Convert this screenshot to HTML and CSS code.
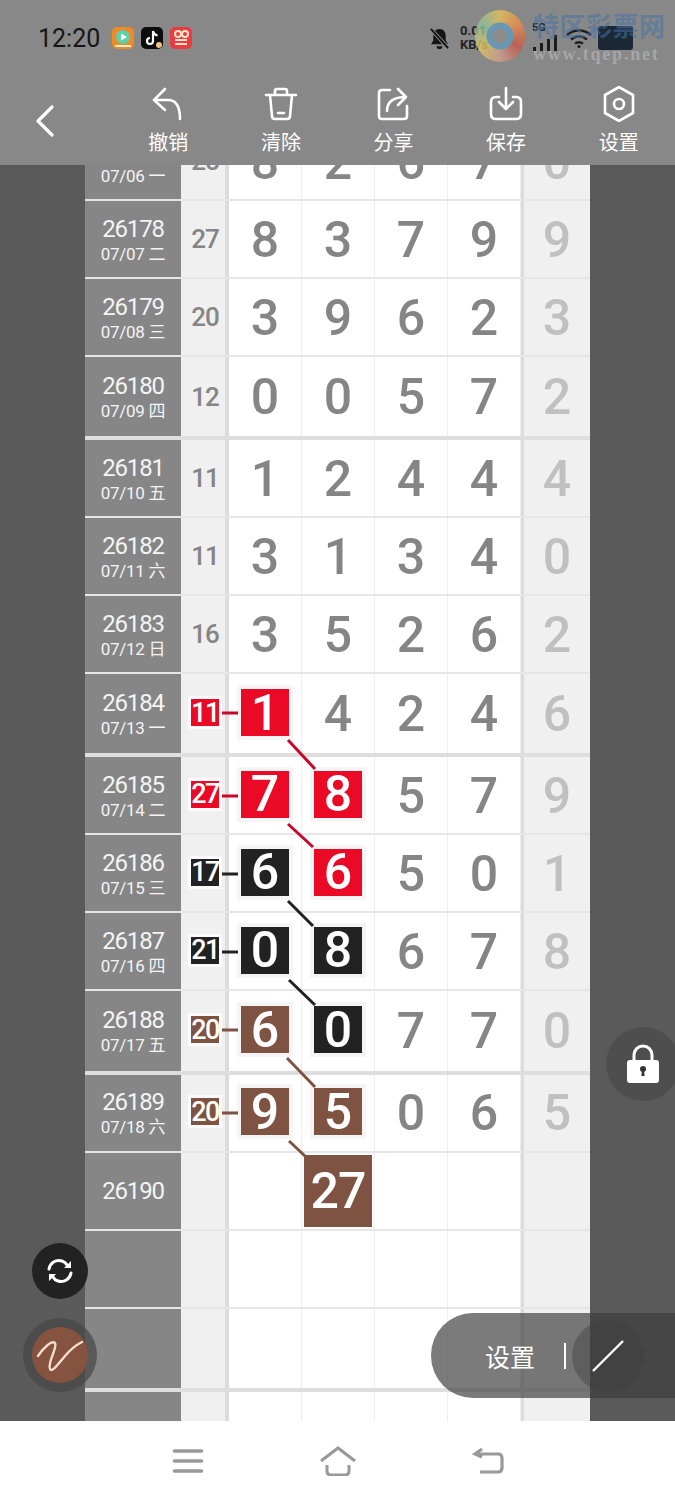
FILE: index.html
```html
<!DOCTYPE html>
<html lang="zh-CN">
<head>
    <meta charset="UTF-8">
    <meta name="viewport" content="width=device-width, initial-scale=1.0">
    <title>走势图</title>
    <link rel="stylesheet" href="styles.css">
</head>
<body>
    <header class="top">
        <div class="status">
            <span class="clock">12:20</span>
            <svg class="app" viewBox="0 0 22 22"><rect width="22" height="22" rx="5" fill="#f08a24"/><circle cx="11" cy="10" r="7" fill="#5fd0a8"/><path d="M9 6.500l6 3.500-6 3.500z" fill="#fff"/><rect x="3" y="18" width="16" height="2" fill="#fff3d8"/></svg>
            <svg class="app" viewBox="0 0 22 22"><rect width="22" height="22" rx="5" fill="#0c0c0c"/><path d="M12 4v10a3 3 0 1 1-3-3M12 4c.5 2.500 2 4 4.500 4.300" fill="none" stroke="#fff" stroke-width="2.200"/><circle cx="18" cy="18" r="3" fill="#f0c080"/></svg>
            <svg class="app" viewBox="0 0 22 22"><rect width="22" height="22" rx="5" fill="#ea3b42"/><circle cx="8" cy="7" r="3" fill="none" stroke="#ffe6c8" stroke-width="2"/><circle cx="15" cy="7" r="3" fill="none" stroke="#ffe6c8" stroke-width="2"/><path d="M5 13h12M5 17h12" stroke="#ffe6c8" stroke-width="2.200"/></svg>
            <div class="status-right">
                <svg class="bell" viewBox="0 0 22 24"><path d="M11 2c4 0 6.500 3 6.500 7v5l2.500 4H2l2.500-4V9C4.500 5 7 2 11 2zM8 20h6a3 3 0 0 1-6 0z" fill="#141414"/><path d="M2 2l18 20" stroke="#888" stroke-width="4"/><path d="M2 2l18 20" stroke="#141414" stroke-width="2"/></svg>
                <div class="speed">0.01<br>KB/s</div>
                <div class="signal"><span class="five">5G</span><svg viewBox="0 0 26 16"><path d="M1 12h3v4H1zM8 8h3v8H8zM15 4h3v12h-3zM22 0h3v16h-3z" fill="#1d1d1d"/></svg></div>
                <svg class="wifi" viewBox="0 0 26 20"><path d="M1 7c7-6 17-6 24 0M5 11.500c5-4 11-4 16 0M9 15.500c3-2 5-2 8 0" fill="none" stroke="#1d1d1d" stroke-width="2.400"/><circle cx="13" cy="18.500" r="1.500" fill="#1d1d1d"/></svg>
                <div class="battery"></div>
            </div>
        </div>
        <nav class="toolbar">
            <div class="back"><svg viewBox="0 0 20 32"><path d="M17 2L3 16l14 14" fill="none" stroke="#fff" stroke-width="3.200" stroke-linecap="round" stroke-linejoin="round"/></svg></div>
            <div class="tool"><svg viewBox="0 0 36 36"><path d="M15 3L4 14l11 10M4 14h14c9 0 12 8 12 19"/></svg><span>撤销</span></div>
            <div class="tool"><svg viewBox="0 0 36 36"><path d="M3 9h30M12 9V5q0-2 2-2h8q2 0 2 2v4M7 9l2 21q0 3 3 3h12q3 0 3-3l2-21M15 27h6"/></svg><span>清除</span></div>
            <div class="tool"><svg viewBox="0 0 36 36"><path d="M15 4H7q-3 0-3 3v23q0 3 3 3h22q3 0 3-3V20M12 25c0-9 6-14 19-14M23 3l8 8-8 8"/></svg><span>分享</span></div>
            <div class="tool"><svg viewBox="0 0 36 36"><path d="M11 11H8q-5 0-5 5v12q0 5 5 5h20q5 0 5-5V16q0-5-5-5h-3M18 2v21M11 16l7 7 7-7"/></svg><span>保存</span></div>
            <div class="tool"><svg viewBox="0 0 36 36"><path d="M18 1l14 8v18l-14 8-14-8V9z"/><circle cx="18" cy="18" r="5"/></svg><span>设置</span></div>
        </nav>
        <div class="logo-mark"><span class="swirl"></span><div class="logo-text"><b>特区彩票网</b><i>www.tqep.net</i></div></div>
    </header>

    <main class="view">
        <div class="sheet">
            <div class="row"><div class="date"><b>26177</b><small>07/06 一</small></div><div class="sum">25</div><div class="num">8</div><div class="num">2</div><div class="num">6</div><div class="num">7</div><div class="last">0</div></div>
            <div class="row"><div class="date"><b>26178</b><small>07/07 二</small></div><div class="sum">27</div><div class="num">8</div><div class="num">3</div><div class="num">7</div><div class="num">9</div><div class="last">9</div></div>
            <div class="row"><div class="date"><b>26179</b><small>07/08 三</small></div><div class="sum">20</div><div class="num">3</div><div class="num">9</div><div class="num">6</div><div class="num">2</div><div class="last">3</div></div>
            <div class="row end"><div class="date"><b>26180</b><small>07/09 四</small></div><div class="sum">12</div><div class="num">0</div><div class="num">0</div><div class="num">5</div><div class="num">7</div><div class="last">2</div></div>

            <div class="row"><div class="date"><b>26181</b><small>07/10 五</small></div><div class="sum">11</div><div class="num">1</div><div class="num">2</div><div class="num">4</div><div class="num">4</div><div class="last">4</div></div>
            <div class="row"><div class="date"><b>26182</b><small>07/11 六</small></div><div class="sum">11</div><div class="num">3</div><div class="num">1</div><div class="num">3</div><div class="num">4</div><div class="last">0</div></div>
            <div class="row"><div class="date"><b>26183</b><small>07/12 日</small></div><div class="sum">16</div><div class="num">3</div><div class="num">5</div><div class="num">2</div><div class="num">6</div><div class="last">2</div></div>
            <div class="row end"><div class="date"><b>26184</b><small>07/13 一</small></div><div class="sum"><span class="tag red">11</span></div><div class="num"><span class="ball red">1</span></div><div class="num">4</div><div class="num">2</div><div class="num">4</div><div class="last">6</div></div>

            <div class="row"><div class="date"><b>26185</b><small>07/14 二</small></div><div class="sum"><span class="tag red">27</span></div><div class="num"><span class="ball red">7</span></div><div class="num"><span class="ball red">8</span></div><div class="num">5</div><div class="num">7</div><div class="last">9</div></div>
            <div class="row"><div class="date"><b>26186</b><small>07/15 三</small></div><div class="sum"><span class="tag black">17</span></div><div class="num"><span class="ball black">6</span></div><div class="num"><span class="ball red">6</span></div><div class="num">5</div><div class="num">0</div><div class="last">1</div></div>
            <div class="row"><div class="date"><b>26187</b><small>07/16 四</small></div><div class="sum"><span class="tag black">21</span></div><div class="num"><span class="ball black">0</span></div><div class="num"><span class="ball black">8</span></div><div class="num">6</div><div class="num">7</div><div class="last">8</div></div>
            <div class="row end"><div class="date"><b>26188</b><small>07/17 五</small></div><div class="sum"><span class="tag brown">20</span></div><div class="num"><span class="ball brown">6</span></div><div class="num"><span class="ball black">0</span></div><div class="num">7</div><div class="num">7</div><div class="last">0</div></div>

            <div class="row"><div class="date"><b>26189</b><small>07/18 六</small></div><div class="sum"><span class="tag brown">20</span></div><div class="num"><span class="ball brown">9</span></div><div class="num"><span class="ball brown">5</span></div><div class="num">0</div><div class="num">6</div><div class="last">5</div></div>
            <div class="row"><div class="date"><b>26190</b></div><div class="sum"></div><div class="num"></div><div class="num"><span class="big">27</span></div><div class="num"></div><div class="num"></div><div class="last"></div></div>
            <div class="row"><div class="date"></div><div class="sum"></div><div class="num"></div><div class="num"></div><div class="num"></div><div class="num"></div><div class="last"></div></div>
            <div class="row end"><div class="date"></div><div class="sum"></div><div class="num"></div><div class="num"></div><div class="num"></div><div class="num"></div><div class="last"></div></div>

            <div class="row"><div class="date"></div><div class="sum"></div><div class="num"></div><div class="num"></div><div class="num"></div><div class="num"></div><div class="last"></div></div>

            <!-- connecting lines, viewBox is in page coordinates -->
            <svg class="links" viewBox="85 122 505 1300">
                <g stroke="#c8082a"><path d="M222 712h16M288 739l27 29M222 795h16M288 823l25 23"/></g>
                <g stroke="#222"><path d="M222 873h16M288 900l25 25M222 951h16M289 979l26 25"/></g>
                <g stroke="#7f5342"><path d="M222 1029h16M287 1057l28 29M222 1112h16M289 1140l16 15"/></g>
            </svg>
        </div>

        <div class="fab sync"><svg viewBox="0 0 32 32"><path d="M5 14C6 8 12 4 18 6c2 .7 4 2 5 4M27 18c-1 6-7 10-13 8-2-.7-4-2-5-4" fill="none" stroke="#fff" stroke-width="3" stroke-linecap="round"/><path d="M27 6v7h-7zM5 26v-7h7z" fill="#fff"/></svg></div>
        <div class="fab pen"><svg viewBox="0 0 50 40"><path d="M3 21C9 12 17 5 20 8c3 4-8 20-5 26 2 4 9-6 15-13 5-6 11-11 17-14" fill="none" stroke="#f7dccf" stroke-width="2.400" stroke-linecap="round"/></svg></div>
        <div class="fab lock"><svg viewBox="0 0 34 40"><path d="M8 18V11a9 9 0 0 1 18 0v7" fill="none" stroke="#fff" stroke-width="3"/><rect x="1" y="16" width="32" height="23" rx="3" fill="#fff"/><circle cx="17" cy="25" r="3" fill="#333"/><path d="M16 26h2l.6 6h-3.200z" fill="#333"/></svg></div>

        <div class="pill">
            <span class="pill-label">设置</span>
            <span class="pill-bar"></span>
            <span class="pill-round"><svg viewBox="0 0 32 32"><path d="M1 31L31 1" stroke="#fff" stroke-width="2.400"/></svg></span>
        </div>
    </main>

    <footer class="nav">
        <svg viewBox="0 0 36 30"><path d="M4.500 5h27M4.500 15h27M4.500 25h27" stroke="#999" stroke-width="3.600" stroke-linecap="round"/></svg>
        <svg viewBox="0 0 36 30"><path d="M1 15L18 2l17 13M7 19v6q0 4 4 4h14q4 0 4-4v-6" fill="none" stroke="#999" stroke-width="3"/></svg>
        <svg viewBox="0 0 36 30"><path d="M5 8h23q4 0 4 4v10q0 4-4 4H10M12 3L5 8l7 3" fill="none" stroke="#999" stroke-width="3.200"/></svg>
    </footer>
</body>
</html>
```

FILE: styles.css
```css
* {
    box-sizing: border-box;
}
body {
    margin: 0;
    width: 675px;
    height: 1500px;
    display: flex;
    flex-direction: column;
    overflow: hidden;
    background: #fff;
    font-family: Roboto, "Noto Sans CJK SC", sans-serif;
}

/* header */
.top {
    position: relative;
    height: 165px;
    flex: none;
    background: #888;
    z-index: 2;
}
.status {
    height: 72px;
    padding: 4px 0 0 38px;
    display: flex;
    align-items: center;
}
.clock {
    width: 74px;
    font-size: 25px;
    color: #161616;
}
.app {
    width: 22px;
    height: 22px;
    margin-right: 7px;
}
.status-right {
    margin-left: auto;
    display: flex;
    align-items: center;
}
.bell {
    width: 21px;
    height: 23px;
    margin-right: 10px;
}
.speed {
    width: 72px;
    font-size: 13px;
    line-height: 14px;
    font-weight: 700;
    color: #222;
}
.signal {
    position: relative;
    width: 26px;
    height: 26px;
    margin-right: 8px;
}
.signal svg {
    position: absolute;
    left: 0;
    bottom: 0;
    width: 26px;
    height: 16px;
}
.five {
    position: absolute;
    left: 0;
    top: -4px;
    font-size: 11px;
    font-weight: 700;
    color: #222;
}
.wifi {
    width: 26px;
    height: 20px;
    margin-right: 6px;
}
.battery {
    width: 35px;
    height: 24px;
    margin-right: 42px;
    border-radius: 3px;
    background: #1b2836;
}
.toolbar {
    height: 93px;
    display: flex;
}
.back {
    width: 112px;
    padding: 33px 0 0 35px;
}
.back svg {
    width: 20px;
    height: 32px;
}
.tool {
    flex: 1;
    display: flex;
    flex-direction: column;
    align-items: center;
    color: #fff;
    font-size: 20px;
    line-height: 24px;
}
.tool svg {
    width: 36px;
    height: 36px;
    margin: 14px 0 9px;
    fill: none;
    stroke: #fff;
    stroke-width: 2.600;
    stroke-linecap: round;
    stroke-linejoin: round;
}

/* watermark from the source picture */
.logo-mark {
    position: absolute;
    left: 475px;
    top: 10px;
    display: flex;
}
.swirl {
    width: 50px;
    height: 52px;
    border-radius: 50%;
    background: radial-gradient(circle, #8e8e8e 0 7px, #5f9cc0 8px 13px, transparent 14px), conic-gradient(#e8c25a, #e88a4a, #c8584a, #d0a090, #e0c860, #8cc0a0, #e8c25a);
    opacity: .8;
}
.logo-text {
    margin-left: 8px;
    display: flex;
    flex-direction: column;
}
.logo-text b {
    font-size: 26px;
    line-height: 35px;
    letter-spacing: .5px;
    color: rgba(70, 115, 165, .55);
}
.logo-text i {
    font: 700 18px/18px "Liberation Serif", serif;
    letter-spacing: 1.800px;
    color: #a6a6a6;
}

/* sheet */
.view {
    position: relative;
    flex: 1;
    overflow: hidden;
    padding: 0 85px;
    background: #5a5a5a;
}
.sheet {
    position: relative;
    margin-top: -42px;
    background: #fff;
}
.row {
    display: flex;
    height: 78px;
    border-bottom: 2px solid #e6e6e6;
}
.row.end {
    height: 83.200px;
    border-bottom-width: 4px;
    border-bottom-color: #dedede;
}
.date {
    width: 96px;
    flex: none;
    display: flex;
    flex-direction: column;
    align-items: center;
    justify-content: center;
    padding-top: 1px;
    background: #868686;
    color: #f4f4f4;
}
.date b {
    font-size: 24px;
    line-height: 28px;
    font-weight: 400;
    letter-spacing: -1.200px;
}
.date small {
    font-size: 17px;
    line-height: 22px;
    letter-spacing: -.3px;
}
.sum {
    width: 48px;
    flex: none;
    display: flex;
    align-items: center;
    justify-content: center;
    padding-left: 4px;
    background: #f0f0f0;
    border-right: 4px solid #dcdcdc;
    color: #858585;
    font-size: 26px;
    font-weight: 500;
    letter-spacing: -1px;
}
.num {
    width: 73px;
    flex: none;
    display: flex;
    align-items: center;
    justify-content: center;
    padding-top: 1px;
    border-right: 1px solid #eee;
    color: #858585;
    font-size: 50px;
    font-weight: 500;
}
.last {
    flex: 1;
    display: flex;
    align-items: center;
    justify-content: center;
    padding-top: 1px;
    background: #f0f0f0;
    border-left: 3px solid #dcdcdc;
    color: #c0c0c0;
    font-size: 50px;
    font-weight: 500;
}
.tag {
    width: 28px;
    height: 27px;
    margin-top: -2px;
    display: flex;
    align-items: center;
    justify-content: center;
    color: #fff;
    font-size: 27px;
    font-weight: 500;
    letter-spacing: -1.500px;
    box-shadow: 0 0 0 3px #fafafa;
}
.ball {
    width: 48px;
    height: 47px;
    margin-top: -3px;
    display: flex;
    align-items: center;
    justify-content: center;
    color: #fff;
    font-size: 50px;
    box-shadow: 0 0 0 4px #f5f5f5;
}
.big {
    width: 68px;
    height: 72px;
    margin-top: -1px;
    display: flex;
    align-items: center;
    justify-content: center;
    background: #7f5342;
    color: #fff;
    font-size: 50px;
    letter-spacing: -1px;
}
.red {
    background: #ea0a26;
}
.black {
    background: #222;
}
.brown {
    background: #7f5342;
}
.links {
    position: absolute;
    left: 0;
    top: 0;
    width: 505px;
    height: 1300px;
    fill: none;
    stroke-width: 3;
}

/* floating buttons */
.fab {
    position: absolute;
    border-radius: 50%;
    display: flex;
    align-items: center;
    justify-content: center;
}
.sync {
    left: 32px;
    top: 1078px;
    width: 56px;
    height: 56px;
    background: #222;
}
.sync svg {
    width: 32px;
    height: 32px;
}
.pen {
    left: 32px;
    top: 1162px;
    width: 56px;
    height: 56px;
    background: #85533f;
    box-shadow: 0 0 0 9px rgba(70, 70, 70, .7);
}
.pen svg {
    width: 50px;
    height: 40px;
}
.lock {
    left: 606px;
    top: 862px;
    width: 74px;
    height: 74px;
    background: #4e4e4e;
}
.lock svg {
    width: 34px;
    height: 40px;
}
.pill {
    position: absolute;
    left: 431px;
    top: 1148px;
    width: 244px;
    height: 85px;
    display: flex;
    align-items: center;
    border-radius: 42px 0 0 42px;
    background: rgba(60, 60, 60, .68);
    color: #fff;
}
.pill-label {
    margin-left: 54px;
    font-size: 25px;
}
.pill-bar {
    width: 2px;
    height: 26px;
    margin-left: 29px;
    background: #fff;
}
.pill-round {
    width: 72px;
    height: 72px;
    margin-left: 6px;
    display: flex;
    align-items: center;
    justify-content: center;
    border-radius: 50%;
    background: rgba(60, 60, 60, .4);
}
.pill-round svg {
    width: 32px;
    height: 32px;
}

/* android nav */
.nav {
    height: 79px;
    flex: none;
    display: flex;
    align-items: center;
    justify-content: center;
    gap: 114px;
    background: #fff;
}
.nav svg {
    width: 36px;
    height: 30px;
}
```
